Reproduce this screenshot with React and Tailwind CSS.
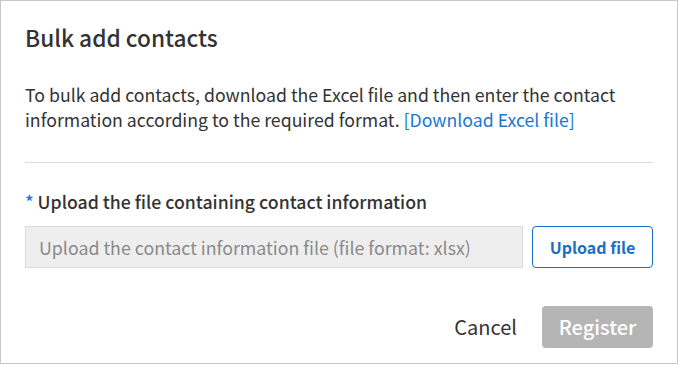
export default function App() {
  return (
    <div className="w-[678px] h-[364px] border border-[#c8c8c8] bg-white text-[#333]" style={{fontFamily: '"Noto Sans CJK KR", "Noto Sans", sans-serif'}}>
      <div className="px-[24px] pt-[22px]">
        <h1 className="text-[22.7px] leading-[30px] font-medium text-[#333]">Bulk add contacts</h1>
        <p className="mt-[29px] text-[17.7px] leading-[25px] text-[#333]">
          To bulk add contacts, download the Excel file and then enter the contact information according to the required format. <span className="text-[#1a77d2]">[Download Excel file]</span>
        </p>
        <div className="mt-[30px] h-px bg-[#dcdcdc]"></div>
        <div className="mt-[26px] text-[17.7px] leading-[24px] font-medium">
          <span className="text-[#1a77d2]">*</span> Upload the file containing contact information
        </div>
        <div className="mt-[13px] flex gap-[9px]">
          <div className="flex-1 h-[42px] bg-[#eeeeee] border border-[#dcdcdc] flex items-center px-[13px] text-[17.8px] text-[#8a8a8a]">
            Upload the contact information file (file format: xlsx)
          </div>
          <button className="w-[121px] h-[42px] border border-[#1a6fc4] rounded-[4px] text-[#1a6fc4] text-[16px] font-bold">Upload file</button>
        </div>
        <div className="mt-[38px] flex justify-end items-center">
          <button className="text-[20px] text-[#333] mr-[25px]">Cancel</button>
          <button className="w-[111px] h-[42px] rounded-[4px] bg-[#b5b5b5] text-white text-[20px] font-medium">Register</button>
        </div>
      </div>
    </div>
  );
}
